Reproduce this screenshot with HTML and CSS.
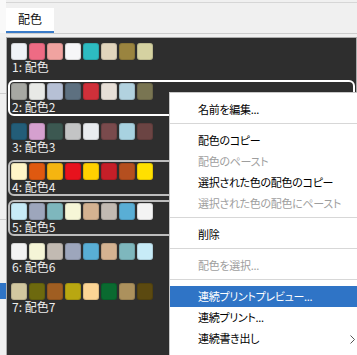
FILE: index.html
```html
<!DOCTYPE html>
<html>
<head>
  <title>配色</title>
  <link rel="stylesheet" href="styles.css">
</head>
<body>
  <div class="side">
    <div class="side-top"></div>
    <div class="side-gap g1"></div>
    <div class="side-line"></div>
    <div class="side-gap g2"></div>
    <div class="side-line"></div>
    <div class="side-gap g3"></div>
    <div class="side-sel"></div>
  </div>

  <div class="main">
    <div class="tabbar">
      <div class="tab">配色</div>
    </div>

    <div class="panel">
      <div class="scheme">
        <div class="swatches">
          <span style="background:#eff2f7"></span>
          <span style="background:#ee6b84"></span>
          <span style="background:#f0a3a0"></span>
          <span style="background:#f6f6f8"></span>
          <span style="background:#2dbcc1"></span>
          <span style="background:#e1d5bc"></span>
          <span style="background:#9a843f"></span>
          <span style="background:#d5d2a1"></span>
        </div>
        <div class="name">1: 配色</div>
      </div>

      <div class="scheme focus">
        <div class="swatches">
          <span style="background:#a7a8a3"></span>
          <span style="background:#e8e9e6"></span>
          <span style="background:#b6c0d5"></span>
          <span style="background:#5d7080"></span>
          <span style="background:#cf303a"></span>
          <span style="background:#e7dfd7"></span>
          <span style="background:#b2d2df"></span>
          <span style="background:#797552"></span>
        </div>
        <div class="name">2: 配色2</div>
      </div>

      <div class="scheme">
        <div class="swatches">
          <span style="background:#235d78"></span>
          <span style="background:#d5a0cf"></span>
          <span style="background:#3c5851"></span>
          <span style="background:#c3c4c5"></span>
          <span style="background:#e9ecef"></span>
          <span style="background:#794a4c"></span>
          <span style="background:#a8d2e0"></span>
          <span style="background:#6b4443"></span>
        </div>
        <div class="name">3: 配色3</div>
      </div>

      <div class="scheme selected">
        <div class="swatches">
          <span style="background:#fff5c7"></span>
          <span style="background:#df5910"></span>
          <span style="background:#f5b510"></span>
          <span style="background:#e7121d"></span>
          <span style="background:#ffd000"></span>
          <span style="background:#c51f28"></span>
          <span style="background:#b54f1f"></span>
          <span style="background:#ffe000"></span>
        </div>
        <div class="name">4: 配色4</div>
      </div>

      <div class="scheme selected">
        <div class="swatches">
          <span style="background:#c7ebf7"></span>
          <span style="background:#9da6bc"></span>
          <span style="background:#7eb7bd"></span>
          <span style="background:#f6f6d7"></span>
          <span style="background:#d4b291"></span>
          <span style="background:#c2bab2"></span>
          <span style="background:#59aed5"></span>
          <span style="background:#f4f4f4"></span>
        </div>
        <div class="name">5: 配色5</div>
      </div>

      <div class="scheme">
        <div class="swatches">
          <span style="background:#f2f2f2"></span>
          <span style="background:#f5f5d7"></span>
          <span style="background:#c2bab2"></span>
          <span style="background:#9da6bc"></span>
          <span style="background:#59aed5"></span>
          <span style="background:#d4b291"></span>
          <span style="background:#7eb7bd"></span>
          <span style="background:#c7ebf7"></span>
        </div>
        <div class="name">6: 配色6</div>
      </div>

      <div class="scheme">
        <div class="swatches">
          <span style="background:#d2c79f"></span>
          <span style="background:#6d690e"></span>
          <span style="background:#a05e22"></span>
          <span style="background:#b9a711"></span>
          <span style="background:#fcd595"></span>
          <span style="background:#0a6a30"></span>
          <span style="background:#ac915d"></span>
          <span style="background:#5b4910"></span>
        </div>
        <div class="name">7: 配色7</div>
      </div>
    </div>
  </div>

  <!-- 右クリックメニュー -->
  <div class="menu">
    <div class="item">名前を編集...</div>
    <div class="sep"></div>
    <div class="item">配色のコピー</div>
    <div class="item disabled">配色のペースト</div>
    <div class="item">選択された色の配色のコピー</div>
    <div class="item disabled">選択された色の配色にペースト</div>
    <div class="sep"></div>
    <div class="item">削除</div>
    <div class="sep"></div>
    <div class="item disabled">配色を選択...</div>
    <div class="sep"></div>
    <div class="item active">連続プリントプレビュー...</div>
    <div class="item">連続プリント...</div>
    <div class="item sub">連続書き出し
      <svg class="arrow" width="5" height="9" viewBox="0 0 5 9"><path d="M0.5 0.5 L4.5 4.5 L0.5 8.5" fill="none" stroke="#555" stroke-width="1"/></svg>
    </div>
  </div>
</body>
</html>
```

FILE: styles.css
```css
/* 配色パネル */
html, body {
  height: 100%;
}

body {
  margin: 0;
  display: flex;
  background-color: #f0f0f0;
  font-family: "Noto Sans CJK JP", "Noto Sans", sans-serif;
  font-size: 12px;
  overflow: hidden;
}

.side {
  width: 6px;
  flex-shrink: 0;
  display: flex;
  flex-direction: column;
}

.side-top {
  height: 33px;
  background-color: #f9f9f9;
}

.g1 { height: 60px; }
.g2 { height: 125px; }
.g3 { height: 63px; }

.side-line {
  height: 1px;
  background-color: #cfcfcf;
}

.side-sel {
  height: 16px;
  background-color: #2f74c6;
}

.main {
  flex: 1;
  display: flex;
  flex-direction: column;
  padding-top: 2px;
}

.tabbar {
  height: 30px;
  display: flex;
  align-items: flex-end;
  border-top: 1px solid #d6d6d6;
  border-bottom: 1px solid #cdcdcd;
  background-color: #f0f0f0;
}

.tab {
  width: 48px;
  height: 23px;
  line-height: 22px;
  text-align: center;
  background-color: #ffffff;
  border-bottom: 2px solid #3a7bc8;
  color: #111;
  font-size: 12px;
}

.panel {
  margin-top: 3px;
  flex: 1;
  background-color: #2e2e2e;
  border: 1px solid #ababab;
  border-bottom: none;
  padding: 2px 1px 0 1px;
}

.scheme {
  height: 36px;
  margin: 0 0 4px 0;
  box-sizing: border-box;
  border: 2px solid transparent;
  border-radius: 6px;
  padding: 1px 0 0 1px;
}

.scheme.focus {
  border-color: #ffffff;
}

.scheme.selected {
  border-color: #bdbdbd;
}

.swatches {
  display: flex;
  gap: 2px;
}

.swatches span {
  width: 16px;
  height: 17px;
  border-radius: 3px;
  box-shadow: inset 0 0 0 1px rgba(0, 0, 0, 0.12);
}

.name {
  color: #ededed;
  font-size: 12px;
  line-height: 14px;
  padding-left: 1px;
}

.menu {
  position: absolute;
  left: 169px;
  top: 92px;
  width: 195px;
  background-color: #ffffff;
  border: 1px solid #c8c8c8;
  padding: 6px 0;
  box-shadow: 2px 2px 3px rgba(0, 0, 0, 0.2);
  font-size: 11px;
  letter-spacing: -0.3px;
  font-feature-settings: "palt";
}

.item {
  position: relative;
  height: 21px;
  line-height: 21px;
  padding-left: 28px;
  color: #000;
  white-space: nowrap;
}

.item.disabled {
  color: #9e9e9e;
}

.item.active {
  background-color: #2f74c6;
  color: #ffffff;
}

.sep {
  height: 1px;
  margin: 3px 0 6px 0;
  background-color: #d7d7d7;
}

.arrow {
  position: absolute;
  right: 10px;
  top: 7px;
}
```
